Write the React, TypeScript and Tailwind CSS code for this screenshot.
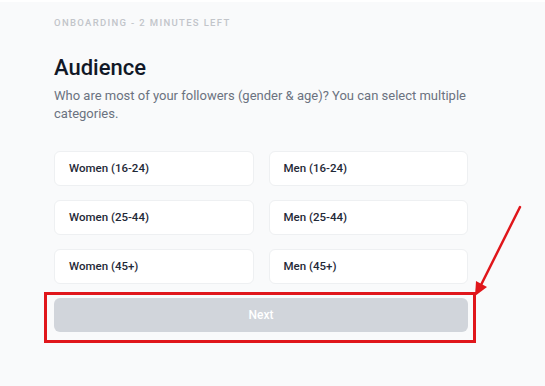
import React from "react";

const options = [
  "Women (16-24)",
  "Men (16-24)",
  "Women (25-44)",
  "Men (25-44)",
  "Women (45+)",
  "Men (45+)",
];

export default function App() {
  return (
    <div
      className="relative w-[545px] h-[386px] overflow-hidden bg-[#f9fafb] border-t-2 border-white"
      style={{ fontFamily: "Roboto, 'Noto Sans', sans-serif" }}
    >
      <div className="w-[414px] ml-[54px] pt-[15px]">
        <div className="text-[9.5px] font-medium tracking-[0.14em] text-[#c2c5ca] leading-[12px]">
          ONBOARDING - 2 MINUTES LEFT
        </div>
        <h1 className="mt-[25px] text-[22px] font-medium leading-[28px] text-[#111827]">
          Audience
        </h1>
        <p className="mt-[5px] w-[416px] text-[13px] leading-[18px] text-[#6b7280]">
          Who are most of your followers (gender &amp; age)? You can select multiple categories.
        </p>
        <div className="mt-[28px] grid grid-cols-2 gap-x-[15px] gap-y-[14px]">
          {options.map((o) => (
            <div
              key={o}
              className="h-[35px] flex items-center px-[14px] bg-white rounded-md border border-[#eef0f2] text-[11.5px] font-medium text-[#1f2937]"
            >
              {o}
            </div>
          ))}
        </div>
        <div className="mt-[14px] h-[34px] flex items-center justify-center rounded-md bg-[#d1d5db] text-[12px] font-medium text-white">
          Next
        </div>
      </div>
      {/* red highlight box */}
      <div className="absolute left-[44px] top-[290px] w-[432px] h-[51px] border-[3px] border-[#e0161b]" />
      {/* arrow */}
      <svg className="absolute left-0 top-0" width="545" height="386">
        <line x1="520" y1="205" x2="481" y2="283" stroke="#e0161b" strokeWidth="2.5" strokeLinecap="round" />
        <polygon points="475,294 476,279 487,285" fill="#e0161b" />
      </svg>
    </div>
  );
}
